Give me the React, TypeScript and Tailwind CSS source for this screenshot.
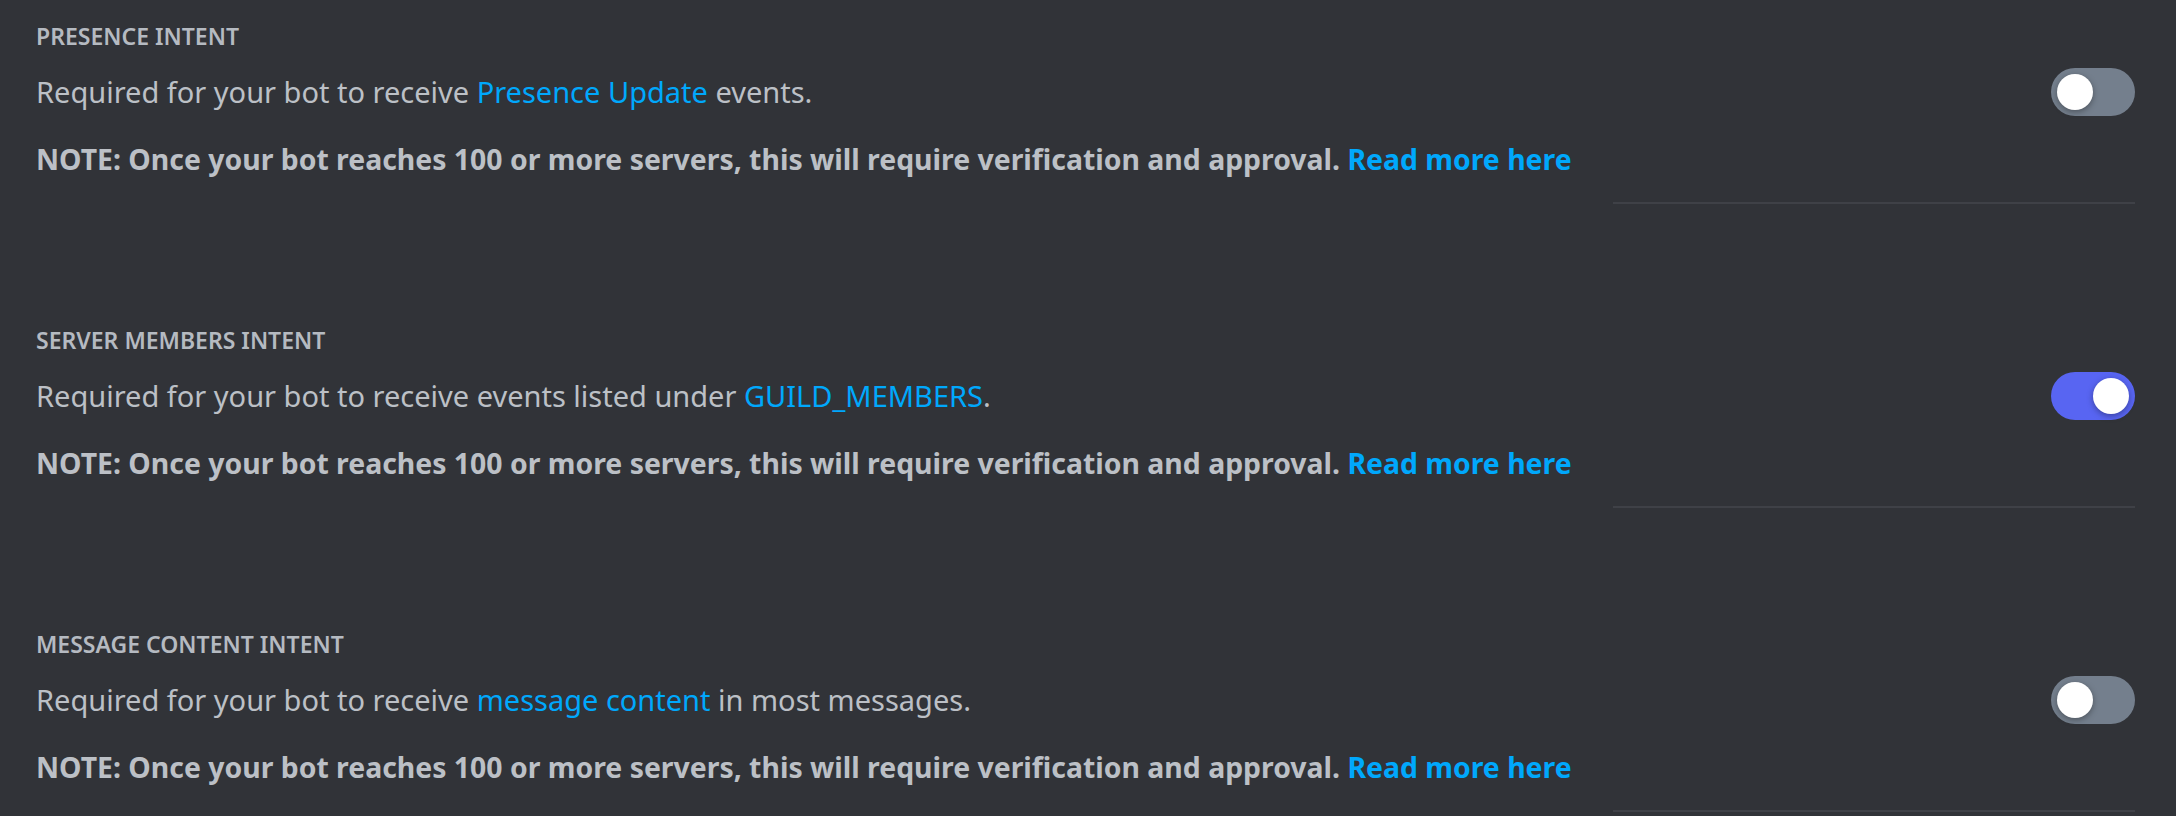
import React from 'react'

type Intent = {
  title: string
  before: string
  link: string
  after: string
  enabled: boolean
}

const intents: Intent[] = [
  {
    title: 'Presence Intent',
    before: 'Required for your bot to receive ',
    link: 'Presence Update',
    after: ' events.',
    enabled: false,
  },
  {
    title: 'Server Members Intent',
    before: 'Required for your bot to receive events listed under ',
    link: 'GUILD_MEMBERS',
    after: '.',
    enabled: true,
  },
  {
    title: 'Message Content Intent',
    before: 'Required for your bot to receive ',
    link: 'message content',
    after: ' in most messages.',
    enabled: false,
  },
]

function Toggle({ on }: { on: boolean }) {
  return (
    <div
      className={`flex h-[48px] w-[84px] shrink-0 items-center rounded-full px-[6px] ${
        on ? 'justify-end bg-[#5865f2]' : 'justify-start bg-[#747f8d]'
      }`}
    >
      <div className="h-[36px] w-[36px] rounded-full bg-white shadow-[0_2px_6px_rgba(0,0,0,0.35)]" />
    </div>
  )
}

function IntentSection({ intent }: { intent: Intent }) {
  return (
    <section className="pt-[22px] pb-[100px]">
      <h2 className="text-[23px] leading-[28px] font-semibold uppercase text-[#b5bac1]">
        {intent.title}
      </h2>
      <div className="mt-[18px] flex items-center justify-between">
        <p className="text-[29px] leading-[48px] text-[#bcc0c6]">
          {intent.before}
          <span className="text-[#00a8fc]">{intent.link}</span>
          {intent.after}
        </p>
        <Toggle on={intent.enabled} />
      </div>
      <p className="mt-[23px] text-[28.4px] leading-[40px] font-bold text-[#bcc0c6]">
        NOTE: Once your bot reaches 100 or more servers, this will require verification and approval.{' '}
        <span className="text-[#00a8fc]">Read more here</span>
      </p>
      <div className="mt-[23px] ml-auto h-[2px] w-[522px] bg-[#3f4147]" />
    </section>
  )
}

export default function App() {
  return (
    <div
      className="min-h-screen bg-[#313338] pl-[36px] pr-[41px]"
      style={{ fontFamily: '"Noto Sans", sans-serif' }}
    >
      {intents.map((intent) => (
        <IntentSection key={intent.title} intent={intent} />
      ))}
    </div>
  )
}
